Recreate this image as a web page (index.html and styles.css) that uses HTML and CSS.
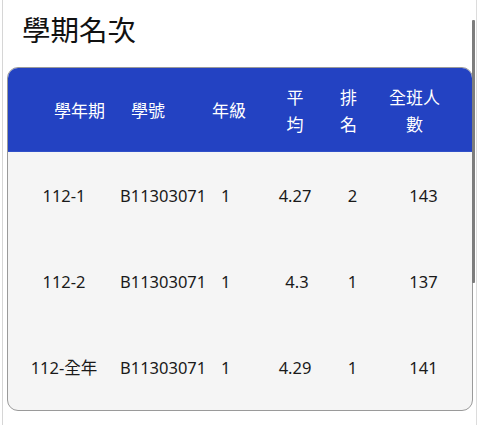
FILE: index.html
```html
<!DOCTYPE html>
<html lang="zh-Hant">
<head>
<meta charset="utf-8">
<link rel="stylesheet" href="styles.css">
</head>
<body>
<div class="frame">
  <h1 class="title">學期名次</h1>
  <div class="card">
    <div class="row head">
      <div class="c1 h1c">學年期</div>
      <div class="c2 h2c">學號</div>
      <div class="c3 h3c">年級</div>
      <div class="c4 h4c">平<br>均</div>
      <div class="c5 h5c">排<br>名</div>
      <div class="c6 h6c">全班人<br>數</div>
    </div>
    <div class="row body">
      <div class="c1">112-1</div>
      <div class="c2">B11303071</div>
      <div class="c3">1</div>
      <div class="c4">4.27</div>
      <div class="c5">2</div>
      <div class="c6">143</div>
    </div>
    <div class="row body">
      <div class="c1">112-2</div>
      <div class="c2">B11303071</div>
      <div class="c3">1</div>
      <div class="c4 c4b">4.3</div>
      <div class="c5">1</div>
      <div class="c6">137</div>
    </div>
    <div class="row body">
      <div class="c1">112-全年</div>
      <div class="c2">B11303071</div>
      <div class="c3">1</div>
      <div class="c4">4.29</div>
      <div class="c5">1</div>
      <div class="c6">141</div>
    </div>
  </div>
  <div class="scrollbar"><div class="thumb"></div></div>
</div>
</body>
</html>
```
FILE: styles.css
```css
html, body {
  margin: 0;
  padding: 0;
  background: #ffffff;
}
body {
  width: 480px;
  height: 425px;
  overflow: hidden;
  font-family: "Noto Sans", "Noto Sans CJK TC", sans-serif;
  color: #222;
}
.frame {
  position: relative;
  height: 425px;
  margin-left: 2px;
  border-left: 1px solid #d6d6d6;
  padding-left: 4px;
  box-sizing: border-box;
}
.title {
  margin: 0;
  padding: 9px 0 0 15px;
  height: 67px;
  box-sizing: border-box;
  font-family: "Noto Sans CJK TC", sans-serif;
  font-weight: 400;
  font-size: 28.5px;
  line-height: 40px;
  color: #111;
}
.card {
  width: 466px;
  border: 1px solid #9a9a9a;
  border-radius: 11px;
  overflow: hidden;
  background: #f5f5f5;
  box-sizing: border-box;
}
.row {
  display: grid;
  grid-template-columns: 112px 92px 48px 70px 45px 97px;
  align-items: center;
}
.head {
  background: #2342c2;
  color: #fff;
  height: 83px;
  font-family: "Noto Sans CJK TC", sans-serif;
  font-size: 17px;
  line-height: 27px;
  border-bottom: 1px solid #3050c8;
}
.body {
  height: 86px;
  font-size: 16.5px;
  font-family: "Noto Sans", "Noto Sans CJK TC", sans-serif;
  color: #1a1a1a;
}
.c1, .c4, .c5, .c6 { text-align: center; }
.c2, .c3 { text-align: left; }
.c3 { padding-left: 9px; }
.h1c { padding-left: 31px; }
.h2c { padding-left: 11px; }
.h3c { padding-left: 0; }
.h5c { padding-right: 8px; }
.h6c { padding-right: 18px; }
.c4b { padding-left: 4px; }
.scrollbar {
  position: absolute;
  top: 0;
  right: 3px;
  width: 4px;
  height: 425px;
  border-right: 1px solid #dcdcdc;
}
.thumb {
  position: absolute;
  top: 20px;
  left: 0;
  width: 3px;
  height: 263px;
  background: #7d7d7d;
  border-radius: 1px;
}
```
